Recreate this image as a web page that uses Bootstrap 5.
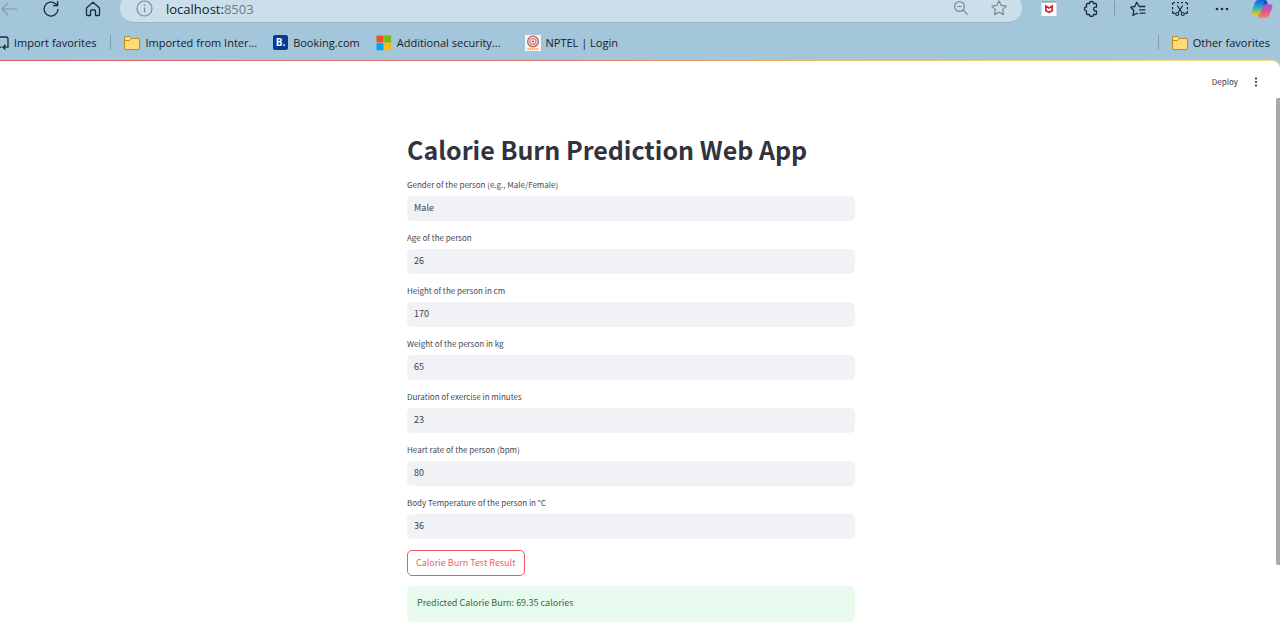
<!DOCTYPE html>
<html lang="en">
<head>
<meta charset="utf-8">
<meta name="viewport" content="width=device-width, initial-scale=1">
<title>Calorie Burn Prediction Web App</title>
<link href="https://cdn.jsdelivr.net/npm/bootstrap@5.3.0/dist/css/bootstrap.min.css" rel="stylesheet">
<style>
  body { background: #a3c6db; font-family: "Noto Sans CJK JP", "Noto Sans", sans-serif; color: #31333f; }
  svg { display: block; }

  /* browser chrome */
  .chrome { font-family: "Open Sans", "Noto Sans", sans-serif; color: #1b2730; }
  .toolbar { height: 29px; margin: -6px -5px 0 -12px; }
  .tool { width: 42px; height: 29px; border: 0; background: none; color: #1d2c38; }
  .tool.faded { color: #8497a4; }
  .tool svg { overflow: visible; }
  .address { height: 29px; margin-left: 6px; margin-right: 6px; padding: 0 14px 0 16px; background: #cbdfea; border-bottom: 1px solid #9ab5c4; border-radius: 14px; }
  .address svg, .address .tool { color: #7b8b95; }
  .address .tool { width: 38px; }
  .address .tool:last-child { margin-right: -10px; }
  .url { font-size: 13px; line-height: 16px; padding-top: 2px; color: #15202a; margin-left: 13px; }
  .url span { color: #6d7d88; }
  .bar { width: 1px; height: 15px; background: #7f9cae; }
  .bar.tight { margin: 0 2px; }
  .bar.after-import { margin: 0 13px 0 14px; }
  .bar.before-other { margin-right: 13px; }
  .favs { height: 37px; padding: 2px 10px 0 0; font-size: 11px; line-height: 16px; }
  .favs a { color: #15202a; text-decoration: none; white-space: nowrap; gap: 5px; }
  .b-logo { width: 15px; height: 15px; border-radius: 2px; background: #063b93; color: #fff; font-size: 10px; line-height: 15px; font-weight: 700; text-align: center; }

  /* app */
  .edge { padding-top: 1px; background: linear-gradient(90deg, #d9605c 0%, #e07a6c 45%, #e8c25f 65%, #f3e08a 100%); border-radius: 0 8px 0 0; }
  .app { background: #fff; border-radius: 0 8px 0 0; min-height: calc(100vh - 61px); padding-right: 18px; }
  .app-head { height: 42px; font-size: 8px; margin-right: 2px; gap: 14px; }
  .app-head button { border: 0; background: none; padding: 0; color: #31333f; }
  .thumb { right: 0; top: 37px; bottom: 68px; width: 4px; background: #a9a9ad; border-radius: 2px 0 0 2px; }
  .form-col { max-width: 448px; padding-top: 26px; }
  h1 { font-size: 25px; line-height: 40px; font-weight: 700; margin: 0 0 9px; white-space: nowrap; }
  .field { margin-bottom: 10px; }
  .field label { display: block; font-size: 8px; line-height: 14px; margin-bottom: 4px; color: #464853; }
  .field .form-control { height: 25px; border: 0; border-radius: 5px; background: #f0f2f6; color: #3c3e49; font-size: 9px; line-height: 15px; padding: 4px 7px 6px; }
  .btn-run { height: 26px; margin-top: 11px; border: 1px solid #f25c5f; border-radius: 5px; color: #f25c5f; font-size: 9px; line-height: 14px; padding: 4px 8px; background: #fff; }
  .alert-result { margin: 10px 0 0; border: 0; border-radius: 5px; background: #e8f9ee; color: #2f6f49; font-size: 9px; line-height: 16px; padding: 9px 10px 11px; }
</style>
</head>
<body>
<header class="chrome overflow-hidden">
  <div class="toolbar d-flex align-items-center">
    <button class="tool faded d-flex align-items-center justify-content-center p-0" aria-label="Back">
      <svg width="16" height="16" viewBox="0 0 16 16" fill="none" stroke="currentColor" stroke-width="1.2"><path d="M16 8H1M7 2L1 8l6 6"/></svg>
    </button>
    <button class="tool d-flex align-items-center justify-content-center p-0" aria-label="Refresh">
      <svg width="16" height="16" viewBox="0 0 16 16" fill="none" stroke="currentColor" stroke-width="1.3"><path d="M15 8a7 7 0 1 1-2.5-5.3L14.5 4.500M14.600 0v4.600H10"/></svg>
    </button>
    <button class="tool d-flex align-items-center justify-content-center p-0" aria-label="Home">
      <svg width="16" height="16" viewBox="0 0 16 16" fill="none" stroke="currentColor" stroke-width="1.3" stroke-linejoin="round"><path d="M1.500 7L8 1.300 14.500 7v6.500a1 1 0 0 1-1 1H10.500V10a1 1 0 0 0-1-1h-3a1 1 0 0 0-1 1v4.500h-3a1 1 0 0 1-1-1z"/></svg>
    </button>
    <div class="address d-flex align-items-center flex-grow-1">
      <svg width="17" height="17" viewBox="0 0 17 17" fill="none" stroke="currentColor" stroke-width="1.2"><circle cx="8.500" cy="8.500" r="7.500"/><path d="M8.500 7.500v5M8.500 4.500v1.500"/></svg>
      <div class="url flex-grow-1">localhost:<span>8503</span></div>
      <button class="tool d-flex align-items-center justify-content-center p-0" aria-label="Zoom out">
        <svg width="14" height="14" viewBox="0 0 14 14" fill="none" stroke="currentColor" stroke-width="1.2"><circle cx="5.500" cy="5.500" r="4.900"/><path d="M9 9l4.500 4.500M3 5.500h5"/></svg>
      </button>
      <button class="tool d-flex align-items-center justify-content-center p-0" aria-label="Add to favorites">
        <svg width="16" height="16" viewBox="0 0 16 16" fill="none" stroke="currentColor" stroke-width="1.2" stroke-linejoin="round"><path d="M8 .8l2.200 4.600 5 .7-3.600 3.500.9 5L8 12.200l-4.500 2.400.9-5L.8 6.100l5-.7z"/></svg>
      </button>
    </div>
    <button class="tool d-flex align-items-center justify-content-center p-0" aria-label="Security extension">
      <svg width="16" height="16" viewBox="0 0 16 16"><path fill="#fff" d="M.5 0h15v15H.5z"/><path fill="#a3a9ad" d="M.5 0h15v1.800H.5z"/><path d="M4.800 5v4.700L8 11.300l3.200-1.600V5L8 7z" fill="none" stroke="#cf2733" stroke-width="1.700"/></svg>
    </button>
    <button class="tool d-flex align-items-center justify-content-center p-0" aria-label="Extensions">
      <svg width="16" height="16" viewBox="0 0 16 16" fill="none" stroke="currentColor" stroke-width="1.300" stroke-linejoin="round"><path d="M4.500 2.500H6.500a2 2 0 0 1 4 0h2a1 1 0 0 1 1 1v2.700h-1a1.900 1.900 0 0 0 0 3.800h1v2.500a1 1 0 0 1-1 1h-2a2 2 0 0 1-4 0h-2a1 1 0 0 1-1-1V10a2 2 0 0 1 0-4V3.500a1 1 0 0 1 1-1z"/></svg>
    </button>
    <div class="bar tight"></div>
    <button class="tool d-flex align-items-center justify-content-center p-0" aria-label="Favorites">
      <svg width="16" height="16" viewBox="0 0 16 16" fill="none" stroke="currentColor" stroke-width="1.300" stroke-linejoin="round" stroke-linecap="round"><path d="M15 5.500H9.200L6.700 1.300 4.800 5.500.8 6.200l3 3.300-.9 5 3.800-2.200.8.500M9.500 8.800H15M10 12.200h5"/></svg>
    </button>
    <button class="tool d-flex align-items-center justify-content-center p-0" aria-label="Screenshot">
      <svg width="16" height="16" viewBox="0 0 16 16" fill="none" stroke="currentColor" stroke-width="1.200"><path d="M.6 4V2.600a1 1 0 0 1 1-1H3M5 1.600h2M9 1.600h2M13 1.600h1.400a1 1 0 0 1 1 1V4M15.400 6v2.500M.6 6v2.500M.6 10v1.400a1 1 0 0 0 1 1H3M15.400 10v1.400a1 1 0 0 1-1 1H13M5.300 4.500l4.500 7M10.700 4.500l-4.500 7"/><circle cx="5.200" cy="13" r="1.500"/><circle cx="10.800" cy="13" r="1.500"/></svg>
    </button>
    <button class="tool d-flex align-items-center justify-content-center p-0" aria-label="Settings and more">
      <svg width="14" height="4" viewBox="0 0 14 4" fill="currentColor"><circle cx="2" cy="2" r="1.300"/><circle cx="7" cy="2" r="1.300"/><circle cx="12" cy="2" r="1.300"/></svg>
    </button>
    <button class="tool d-flex align-items-center justify-content-start p-0 ps-2" aria-label="Copilot">
      <svg width="22" height="20" viewBox="0 0 22 20">
        <defs>
          <linearGradient id="cpA" x1="0" y1="0" x2="0" y2="1"><stop offset="0" stop-color="#1b5fe0"/><stop offset=".45" stop-color="#21a5dc"/><stop offset=".7" stop-color="#6cc46a"/><stop offset="1" stop-color="#f5c330"/></linearGradient>
          <linearGradient id="cpB" x1="0" y1="0" x2="0" y2="1"><stop offset="0" stop-color="#9a55e8"/><stop offset=".5" stop-color="#e2508f"/><stop offset="1" stop-color="#fb8a4c"/></linearGradient>
        </defs>
        <path fill="url(#cpA)" d="M7 1h7q1.500 0 2 2l.6 2.300h-2q-2 0-2.600 2L9.600 14q-.6 2-2.600 2H3.200Q0 16 .8 12.500L3.600 4Q4.600 1 7 1z"/>
        <path fill="url(#cpB)" d="M15.500 5.300h3.300q3.200 0 2.400 3.500L18.400 16q-1 3-3.400 3H9.500q-2 0-2.500-2l-.4-1q2.400 0 3-2l2.200-6.700q.7-2 3.700-2z"/>
        <path fill="#1c4fb5" d="M13.500 1q2 0 2.600 2l.7 2.300h-2q-2 0-2.700 2z"/>
      </svg>
    </button>
  </div>
  <nav class="favs d-flex align-items-center" aria-label="Favorites bar">
    <a href="#" class="d-flex align-items-center">
      <svg width="9" height="15" viewBox="0 0 9 15" fill="none" stroke="#1d2c38" stroke-width="1.300"><path d="M0 2h6a2 2 0 0 1 2 2v8.200H3.500M5.500 9.700L3 12.200l2.500 2.500M0 12.200h1.500"/></svg>Import favorites</a>
    <div class="bar after-import"></div>
    <a href="#" class="d-flex align-items-center">
      <svg width="16" height="14" viewBox="0 0 16 14" fill="#ffdc75" stroke="#b98a1c"><path d="M.5 2a1.500 1.500 0 0 1 1.500-1.500h3.500L7.500 2.500H14A1.500 1.500 0 0 1 15.500 4v8A1.500 1.500 0 0 1 14 13.500H2A1.500 1.500 0 0 1 .5 12z"/><path fill="none" d="M.5 4.500h5l2-2"/></svg>Imported from Inter...</a>
    <a href="#" class="d-flex align-items-center ms-3"><span class="b-logo">B.</span>Booking.com</a>
    <a href="#" class="d-flex align-items-center ms-3">
      <svg width="16" height="16" viewBox="0 0 16 16"><path fill="#f25022" d="M.5.5h7v7h-7z"/><path fill="#7fba00" d="M8.200.5h7v7h-7z"/><path fill="#00a4ef" d="M.5 8.200h7v7h-7z"/><path fill="#ffb900" d="M8.200 8.200h7v7h-7z"/></svg>Additional security...</a>
    <a href="#" class="d-flex align-items-center ms-4">
      <svg width="16" height="16" viewBox="0 0 16 16" fill="none"><path fill="#fbf3ee" d="M0 0h16v16H0z"/><circle cx="8" cy="6.500" r="5.300" stroke="#b8604e" stroke-width="1.300"/><circle cx="8" cy="6.500" r="3" stroke="#cc8a92" stroke-width="1.400"/><circle cx="8" cy="6.500" r="1" fill="#8a4c66"/><path d="M2.500 14h11" stroke="#e79a55" stroke-width="1.600" stroke-dasharray="1.500 .6"/></svg>NPTEL | Login</a>
    <div class="bar before-other ms-auto"></div>
    <a href="#" class="d-flex align-items-center">
      <svg width="16" height="14" viewBox="0 0 16 14" fill="#ffdc75" stroke="#b98a1c"><path d="M.5 2a1.500 1.500 0 0 1 1.500-1.500h3.500L7.500 2.500H14A1.500 1.500 0 0 1 15.500 4v8A1.500 1.500 0 0 1 14 13.500H2A1.500 1.500 0 0 1 .5 12z"/><path fill="none" d="M.5 4.500h5l2-2"/></svg>Other favorites</a>
  </nav>
</header>

<div class="edge">
  <div class="app position-relative">
    <div class="thumb position-absolute"></div>
    <div class="app-head d-flex align-items-center justify-content-end">
      <button type="button">Deploy</button>
      <button type="button" aria-label="Menu"><svg width="8" height="10" viewBox="0 0 8 10" fill="#31333f"><circle cx="4" cy="1.500" r="1.100"/><circle cx="4" cy="5" r="1.100"/><circle cx="4" cy="8.500" r="1.100"/></svg></button>
    </div>
    <main class="form-col mx-auto">
      <h1>Calorie Burn Prediction Web App</h1>
      <form>
        <div class="field"><label for="gender">Gender of the person (e.g., Male/Female)</label><input id="gender" class="form-control" value="Male"></div>
        <div class="field"><label for="age">Age of the person</label><input id="age" class="form-control" value="26"></div>
        <div class="field"><label for="height">Height of the person in cm</label><input id="height" class="form-control" value="170"></div>
        <div class="field"><label for="weight">Weight of the person in kg</label><input id="weight" class="form-control" value="65"></div>
        <div class="field"><label for="duration">Duration of exercise in minutes</label><input id="duration" class="form-control" value="23"></div>
        <div class="field"><label for="heart">Heart rate of the person (bpm)</label><input id="heart" class="form-control" value="80"></div>
        <div class="field"><label for="temp">Body Temperature of the person in °C</label><input id="temp" class="form-control" value="36"></div>
        <button type="button" class="btn btn-run d-block">Calorie Burn Test Result</button>
      </form>
      <div class="alert alert-result" role="alert">Predicted Calorie Burn: 69.35 calories</div>
    </main>
  </div>
</div>
<script src="https://cdn.jsdelivr.net/npm/bootstrap@5.3.0/dist/js/bootstrap.bundle.min.js"></script>
</body>
</html>
